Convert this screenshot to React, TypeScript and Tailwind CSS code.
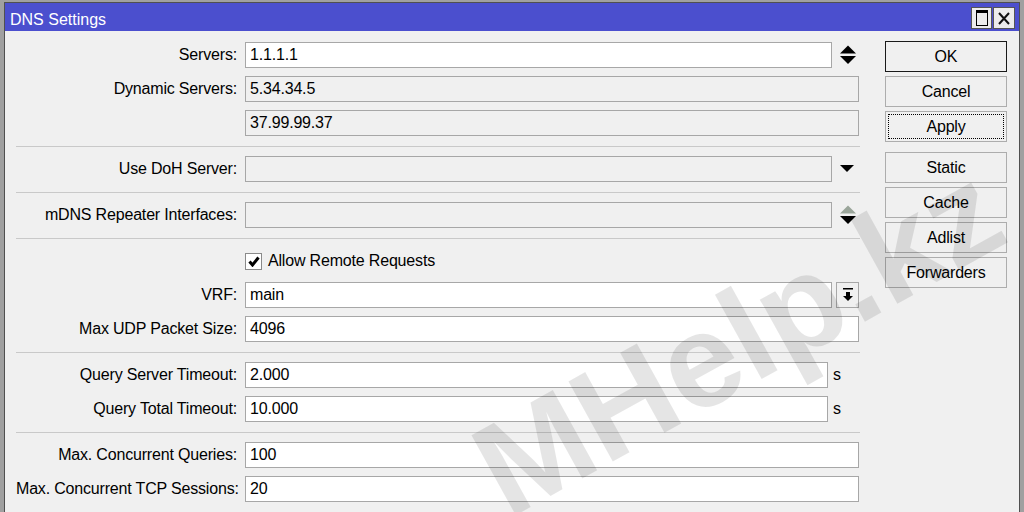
import React from 'react';

const UpDown: React.FC<{ upColor?: string }> = ({ upColor = '#000' }) => (
    <svg width="16" height="20" viewBox="0 0 16 20">
        <polygon points="0,8.5 8,0.5 16,8.5" fill={upColor} />
        <polygon points="0,11 8,19 16,11" fill="#000" />
    </svg>
);

const Row: React.FC<{ label?: string; children: React.ReactNode }> = ({ label, children }) => (
    <div className="flex items-center h-[26px]">
        <div className="w-[222px] text-right pr-px whitespace-nowrap">{label ? `${label}:` : ''}</div>
        <div className="ml-[7px] flex items-center">{children}</div>
    </div>
);

const Field: React.FC<{ value?: string; w: number; ro?: boolean }> = ({ value = '', w, ro }) => (
    <div
        className={`h-[26px] border border-[#a7a7a7] pl-[4px] flex items-center whitespace-nowrap ${ro ? 'bg-[#f0f0f0]' : 'bg-white'}`}
        style={{ width: w }}
    >
        {value}
    </div>
);

const Sep = () => <div className="h-px bg-[#c9c9c9] w-[844px] mt-[10px] mb-[9px]" />;

const Btn: React.FC<{ label: string; def?: boolean; focus?: boolean; className?: string }> = ({ label, def, focus, className = '' }) => (
    <button
        className={`relative h-[31px] w-[122px] bg-[#f0f0f0] border ${def ? 'border-[#1a1a1a]' : 'border-[#adadad]'} ${className}`}
    >
        {focus && <span className="absolute inset-[2px] border border-dotted border-black" />}
        {label}
    </button>
);

export default function App() {
    return (
        <div className="relative w-[1024px] h-[512px] overflow-hidden bg-[#a0a0a0] pl-[4px] pr-[4px] pt-[2px] font-['Liberation_Sans',Arial,sans-serif] text-[16px] tracking-[-0.18px] text-black">
            <div className="h-[600px] border border-[#505050] flex flex-col">
                {/* title bar */}
                <div className="h-[28px] bg-[#4b4fce] flex items-center justify-between pl-[5px] pr-[4px]">
                    <span className="text-white tracking-normal pt-[5px]">DNS Settings</span>
                    <div className="flex gap-px pt-[2px]">
                        <div className="w-[21px] h-[22px] bg-[#ececec] border border-[#555] flex items-center justify-center">
                            <div className="w-[12px] h-[16px] border border-black border-t-[3px]" />
                        </div>
                        <div className="w-[22px] h-[22px] bg-[#ececec] border border-[#555] flex items-center justify-center">
                            <svg width="12" height="13" viewBox="0 0 12 13">
                                <path d="M1 1 L11 12 M11 1 L1 12" stroke="#111" strokeWidth="2" />
                            </svg>
                        </div>
                    </div>
                </div>

                <div className="flex-1 bg-[#f0f0f0] flex">
                    {/* form */}
                    <div className="w-[864px] pl-[11px] pt-[11px] flex flex-col">
                        <div className="flex flex-col gap-[8px]">
                            <Row label="Servers">
                                <Field value="1.1.1.1" w={587} />
                                <div className="pl-[8px]"><UpDown /></div>
                            </Row>
                            <Row label="Dynamic Servers">
                                <Field value="5.34.34.5" w={614} ro />
                            </Row>
                            <Row>
                                <Field value="37.99.99.37" w={614} ro />
                            </Row>
                        </div>
                        <Sep />
                        <Row label="Use DoH Server">
                            <Field w={587} ro />
                            <svg className="ml-[8px]" width="14" height="8" viewBox="0 0 14 8">
                                <polygon points="0,0 14,0 7,7" fill="#000" />
                            </svg>
                        </Row>
                        <Sep />
                        <Row label="mDNS Repeater Interfaces">
                            <Field w={587} ro />
                            <div className="pl-[8px]"><UpDown upColor="#9aa59a" /></div>
                        </Row>
                        <Sep />
                        <div className="flex flex-col gap-[8px]">
                            <Row>
                                <div className="flex items-center">
                                    <div className="w-[17px] h-[17px] bg-white border border-[#8a8a8a] flex items-center justify-center">
                                        <svg width="12" height="11" viewBox="0 0 12 11">
                                            <path d="M1.5 5.5 L4.5 9 L10.5 1.5" stroke="#000" strokeWidth="3" fill="none" />
                                        </svg>
                                    </div>
                                    <span className="ml-[6px]">Allow Remote Requests</span>
                                </div>
                            </Row>
                            <Row label="VRF">
                                <Field value="main" w={587} />
                                <div className="ml-[4px] w-[23px] h-[26px] border border-[#a7a7a7] bg-[#f0f0f0] flex items-center justify-center">
                                    <svg width="12" height="16" viewBox="0 0 12 16">
                                        <rect x="1" y="1" width="10" height="1.5" fill="#000" />
                                        <rect x="4" y="5" width="4" height="4" fill="#000" />
                                        <polygon points="1,9 11,9 6,14" fill="#000" />
                                    </svg>
                                </div>
                            </Row>
                            <Row label="Max UDP Packet Size">
                                <Field value="4096" w={614} />
                            </Row>
                        </div>
                        <Sep />
                        <div className="flex flex-col gap-[8px]">
                            <Row label="Query Server Timeout">
                                <Field value="2.000" w={583} />
                                <span className="ml-[5px]">s</span>
                            </Row>
                            <Row label="Query Total Timeout">
                                <Field value="10.000" w={583} />
                                <span className="ml-[5px]">s</span>
                            </Row>
                        </div>
                        <Sep />
                        <div className="flex flex-col gap-[8px]">
                            <Row label="Max. Concurrent Queries">
                                <Field value="100" w={614} />
                            </Row>
                            <Row label="Max. Concurrent TCP Sessions">
                                <Field value="20" w={614} />
                            </Row>
                        </div>
                        <Sep />
                    </div>

                    {/* buttons */}
                    <div className="ml-[16px] pt-[10px] flex flex-col gap-[4px]">
                        <Btn label="OK" def />
                        <Btn label="Cancel" />
                        <Btn label="Apply" focus />
                        <Btn label="Static" className="mt-[6px]" />
                        <Btn label="Cache" />
                        <Btn label="Adlist" />
                        <Btn label="Forwarders" />
                    </div>
                </div>
            </div>

            {/* watermark */}
            <div className="absolute left-[738px] top-[340px] -translate-x-1/2 -translate-y-1/2 -rotate-[29deg] text-[133px] font-bold leading-none tracking-normal whitespace-nowrap text-black/10 pointer-events-none">
                MHelp.kz
            </div>
        </div>
    );
}
